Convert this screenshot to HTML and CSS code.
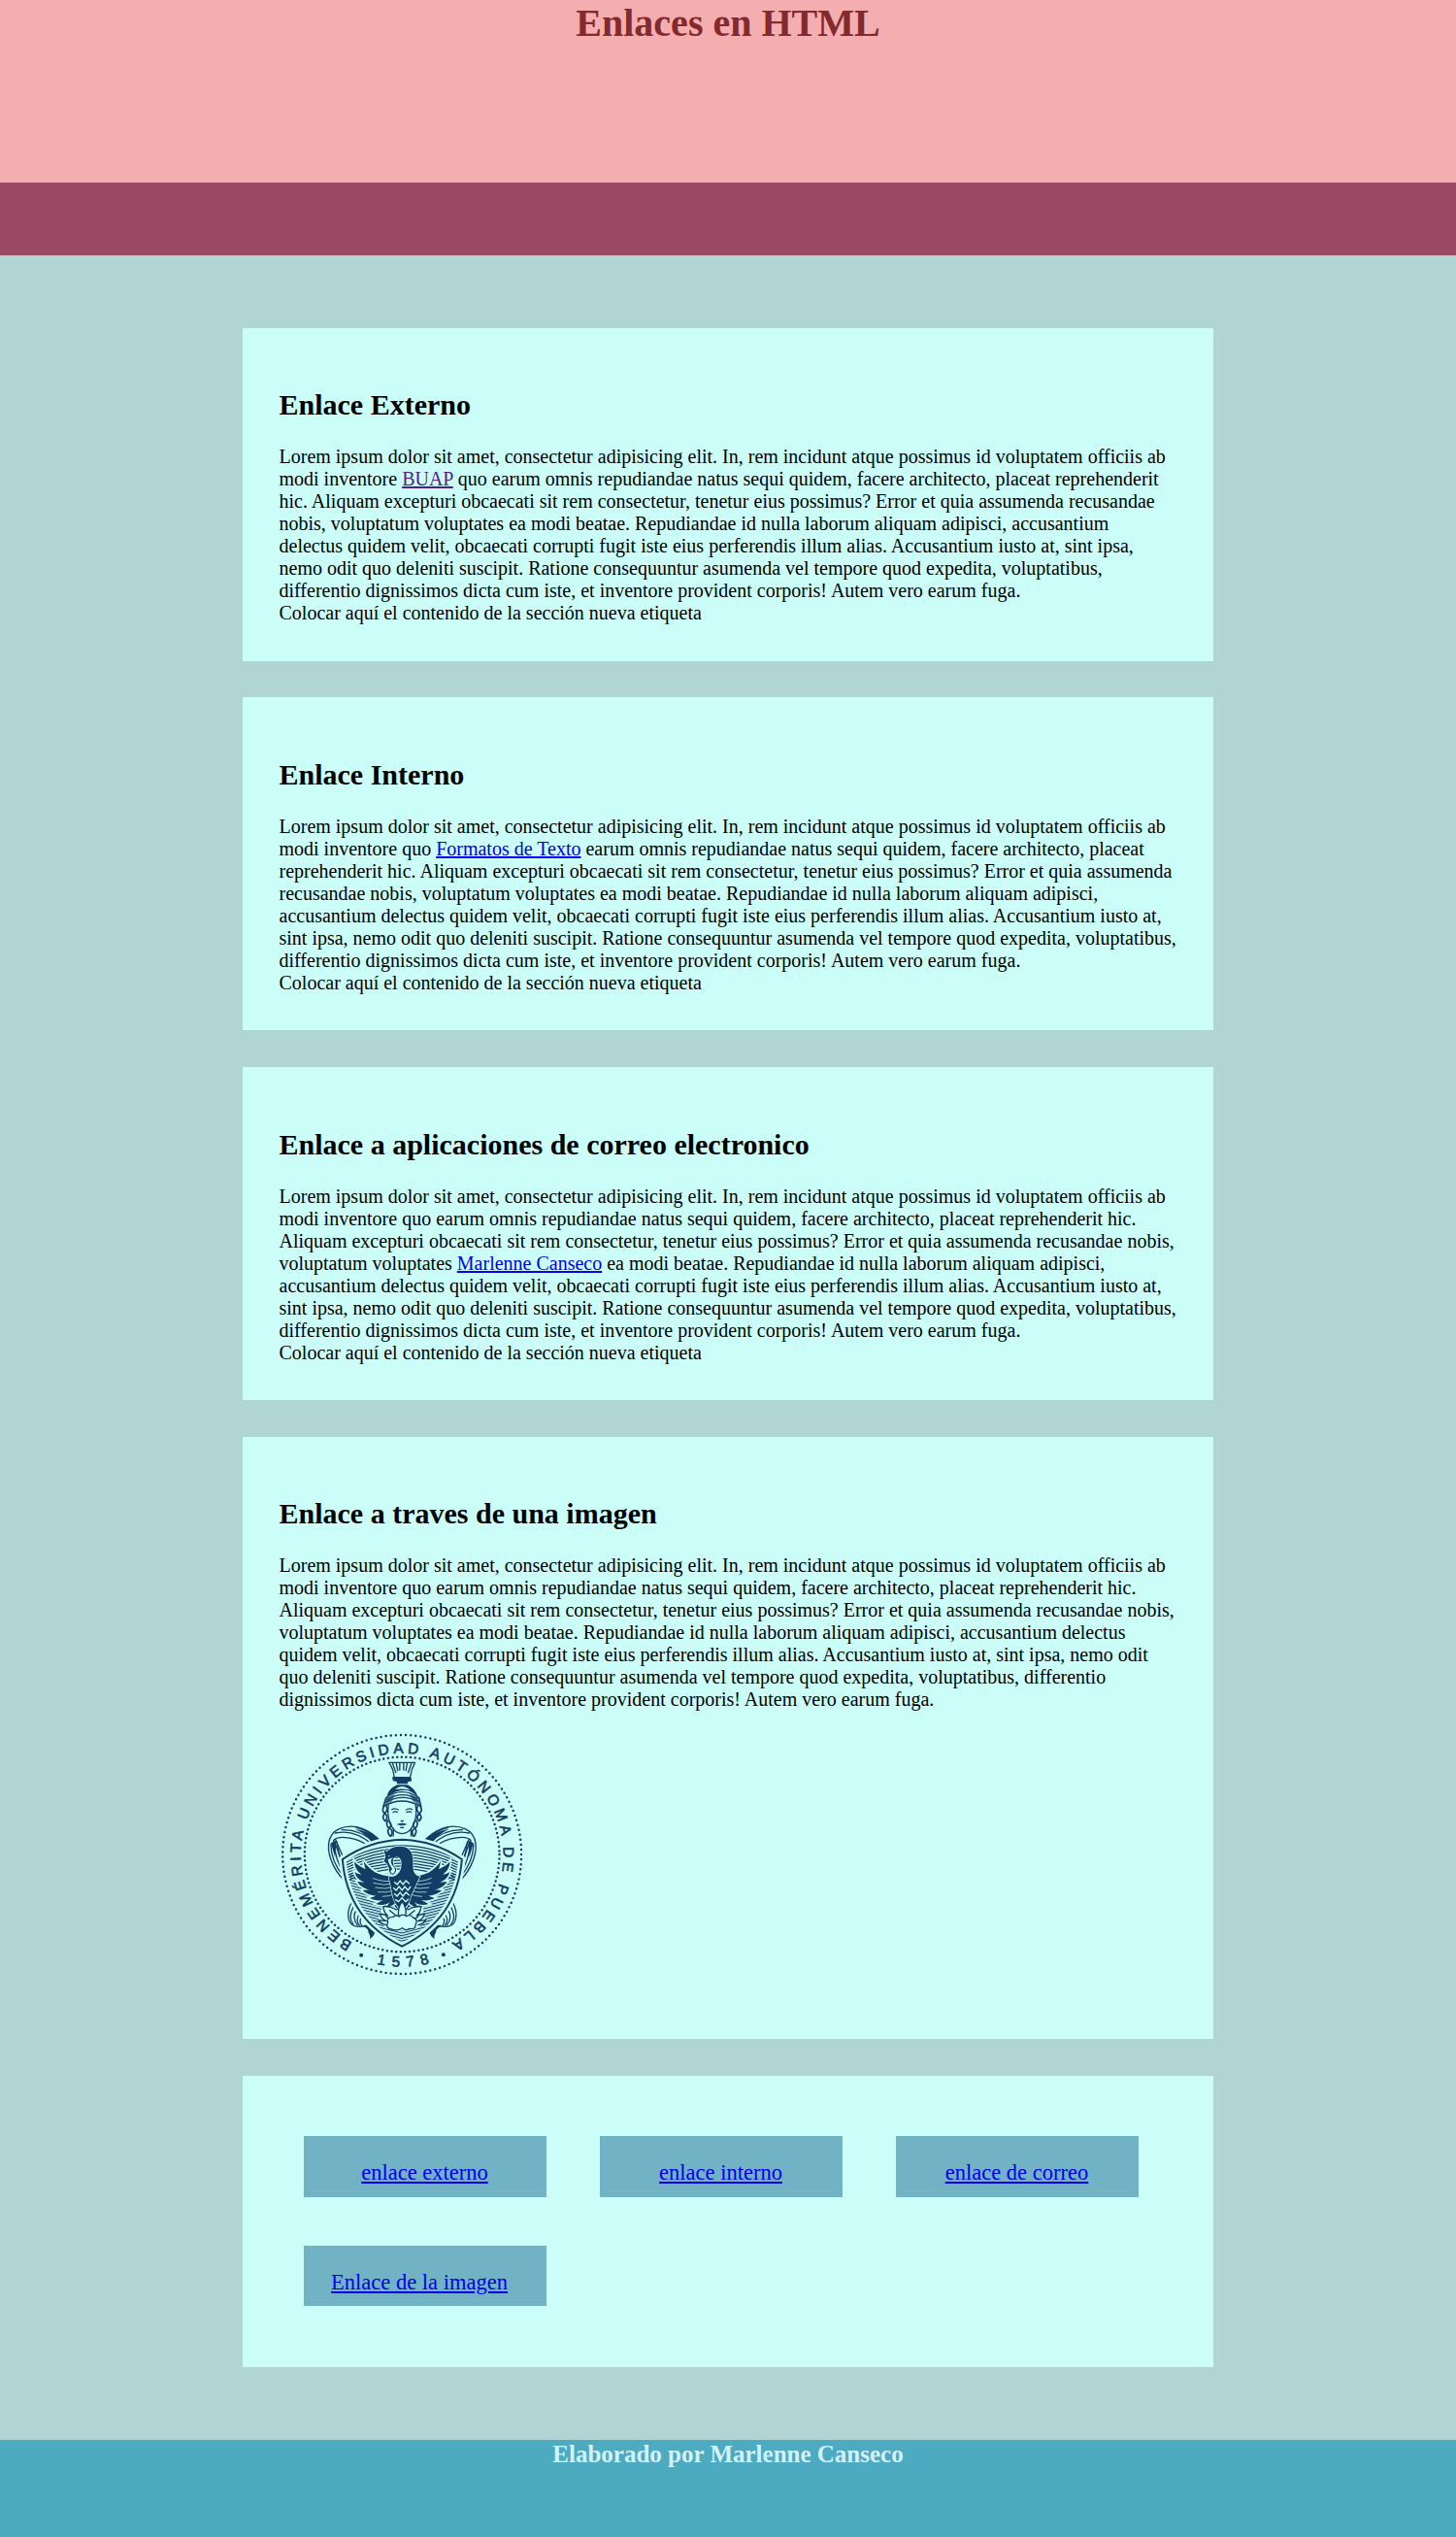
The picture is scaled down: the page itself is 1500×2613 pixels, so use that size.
FILE: index.html
```html
<!DOCTYPE html>
<html lang="es">
<head>
<meta charset="utf-8">
<title>Enlaces en HTML</title>
<link rel="stylesheet" href="styles.css">
</head>
<body>
<header class="header"><h1>Enlaces en HTML</h1></header>
<nav class="nav"></nav>
<main class="main">
  <section class="card" id="externo">
    <h2>Enlace Externo</h2>
    <div>Lorem ipsum dolor sit amet, consectetur adipisicing elit. In, rem incidunt atque possimus id voluptatem officiis ab modi inventore <a class="visited" href="#externo">BUAP</a> quo earum omnis repudiandae natus sequi quidem, facere architecto, placeat reprehenderit hic. Aliquam excepturi obcaecati sit rem consectetur, tenetur eius possimus? Error et quia assumenda recusandae nobis, voluptatum voluptates ea modi beatae. Repudiandae id nulla laborum aliquam adipisci, accusantium delectus quidem velit, obcaecati corrupti fugit iste eius perferendis illum alias. Accusantium iusto at, sint ipsa, nemo odit quo deleniti suscipit. Ratione consequuntur asumenda vel tempore quod expedita, voluptatibus, differentio dignissimos dicta cum iste, et inventore provident corporis! Autem vero earum fuga.</div>
    <div>Colocar aquí el contenido de la sección nueva etiqueta</div>
  </section>
  <section class="card" id="interno">
    <h2>Enlace Interno</h2>
    <div>Lorem ipsum dolor sit amet, consectetur adipisicing elit. In, rem incidunt atque possimus id voluptatem officiis ab modi inventore quo <a href="#interno">Formatos de Texto</a> earum omnis repudiandae natus sequi quidem, facere architecto, placeat reprehenderit hic. Aliquam excepturi obcaecati sit rem consectetur, tenetur eius possimus? Error et quia assumenda recusandae nobis, voluptatum voluptates ea modi beatae. Repudiandae id nulla laborum aliquam adipisci, accusantium delectus quidem velit, obcaecati corrupti fugit iste eius perferendis illum alias. Accusantium iusto at, sint ipsa, nemo odit quo deleniti suscipit. Ratione consequuntur asumenda vel tempore quod expedita, voluptatibus, differentio dignissimos dicta cum iste, et inventore provident corporis! Autem vero earum fuga.</div>
    <div>Colocar aquí el contenido de la sección nueva etiqueta</div>
  </section>
  <section class="card" id="correo">
    <h2>Enlace a aplicaciones de correo electronico</h2>
    <div>Lorem ipsum dolor sit amet, consectetur adipisicing elit. In, rem incidunt atque possimus id voluptatem officiis ab modi inventore quo earum omnis repudiandae natus sequi quidem, facere architecto, placeat reprehenderit hic. Aliquam excepturi obcaecati sit rem consectetur, tenetur eius possimus? Error et quia assumenda recusandae nobis, voluptatum voluptates <a href="#correo">Marlenne Canseco</a> ea modi beatae. Repudiandae id nulla laborum aliquam adipisci, accusantium delectus quidem velit, obcaecati corrupti fugit iste eius perferendis illum alias. Accusantium iusto at, sint ipsa, nemo odit quo deleniti suscipit. Ratione consequuntur asumenda vel tempore quod expedita, voluptatibus, differentio dignissimos dicta cum iste, et inventore provident corporis! Autem vero earum fuga.</div>
    <div>Colocar aquí el contenido de la sección nueva etiqueta</div>
  </section>
  <section class="card card-image" id="imagen">
    <h2>Enlace a traves de una imagen</h2>
    <div>Lorem ipsum dolor sit amet, consectetur adipisicing elit. In, rem incidunt atque possimus id voluptatem officiis ab modi inventore quo earum omnis repudiandae natus sequi quidem, facere architecto, placeat reprehenderit hic. Aliquam excepturi obcaecati sit rem consectetur, tenetur eius possimus? Error et quia assumenda recusandae nobis, voluptatum voluptates ea modi beatae. Repudiandae id nulla laborum aliquam adipisci, accusantium delectus quidem velit, obcaecati corrupti fugit iste eius perferendis illum alias. Accusantium iusto at, sint ipsa, nemo odit quo deleniti suscipit. Ratione consequuntur asumenda vel tempore quod expedita, voluptatibus, differentio dignissimos dicta cum iste, et inventore provident corporis! Autem vero earum fuga.</div>
    <a class="seal-link" href="#imagen">
      <svg class="seal" viewBox="52.5 46 750 750" role="img" aria-label="Escudo BUAP">
        <defs>
          <path id="ring" d="M431 734A313 313 0 1 1 431.1 734"/>
          <path id="ring-low" d="M84 421A347 347 0 0 0 778 421"/>
          <path id="shield" d="M247 436Q330 378 431 375Q532 378 616 436C608 540 562 640 431 705C300 640 255 540 247 436Z"/>
          <clipPath id="shield-clip"><use href="#shield"/></clipPath>
          <pattern id="hatch" width="20" height="8" patternUnits="userSpaceOnUse" patternTransform="rotate(14)"><path d="M0 4H20" class="thin"/></pattern>
          <pattern id="hatch-r" width="20" height="8" patternUnits="userSpaceOnUse" patternTransform="rotate(-14)"><path d="M0 4H20" class="thin"/></pattern>
          <g id="side">
            <!-- ribbon behind the shield -->
            <path class="line" d="M368 384C335 345 285 322 237 342C197 360 196 408 219 455C232 482 250 500 264 512M219 378C233 360 290 368 325 393M219 378C240 415 240 450 262 497M226 376L247 425"/>
            <path class="line" d="M245 345C285 344 318 358 350 386M225 355C270 345 310 365 338 390M290 338C325 345 345 362 360 382M211 390C212 430 230 465 250 488M222 385C222 420 235 455 250 475M230 382C231 400 240 430 244 445"/>
            <path class="ink" d="M285 342Q338 350 373 383L340 389Q325 360 285 342ZM211 385L228 378L224 430Z"/>
            <path class="line" d="M276 568C258 600 262 635 285 642C306 648 332 635 340 655M291 592C280 604 281 626 293 639M309 613C300 620 299 632 307 641M282 580C269 605 270 625 280 636M301 604C290 614 290 630 299 639"/>
            <path class="ink" d="M310 641C326 636 347 644 347 660C346 672 334 680 332 682C334 668 325 663 326 654C320 649 318 647 310 641Z"/>
          </g>
          <g id="wing">
            <path class="ink" d="M418 486C370 493 338 478 312 441L318 467C303 459 291 453 284 443C284 460 292 473 306 483C297 482 291 479 285 475C288 491 300 502 316 507L293 505C301 519 315 527 331 530L309 532C320 542 335 548 350 549L331 556C344 563 360 565 372 562L350 574C366 580 385 576 394 568L382 584C402 582 416 570 423 550Z"/>
            <path class="gap" d="M340 494Q374 508 405 502M342 509Q374 519 407 511M348 523Q378 530 408 521M356 537Q384 541 410 531M370 551Q391 551 412 542"/>
            <path class="line" d="M414 592Q393 579 373 582Q375 602 387 610L363 604Q365 620 383 627L359 624Q366 636 382 639M424 596Q414 586 411 579M393 594L409 607M382 613L394 621"/>
          </g>
        </defs>
        <circle class="dots" cx="431" cy="421" r="369" stroke-dasharray="0 15.35"/>
        <circle class="dots" cx="431" cy="421" r="301" stroke-dasharray="0 14.01"/>
        <text class="legend"><textPath href="#ring" startOffset="160" textLength="1646">BENEMÉRITA UNIVERSIDAD AUTÓNOMA DE PUEBLA</textPath></text>
        <text class="legend year" text-anchor="middle"><textPath href="#ring-low" startOffset="51.3%">1578</textPath></text>
        <circle class="ink" cx="305" cy="732" r="6"/><circle class="ink" cx="559" cy="731" r="6"/>
        <use href="#side"/><use href="#side" transform="matrix(-1 0 0 1 863 0)"/>
        <!-- helmet and face -->
        <path class="line" d="M391 137H471Q459 158 456 183H407Q405 158 391 137ZM402 140L412 168M413 139L418 162M424 139V160M436 139V160M447 139L443 162M460 140L450 168"/>
        <path class="ink" d="M401 181L460 184V195L449 196V203H415V196L403 194ZM416 206Q388 218 383 246Q406 222 441 222Q468 226 481 246Q473 217 448 206Z"/>
        <path class="paper" d="M410 220Q431 201 456 222Q432 216 410 220Z"/>
        <path class="ink" d="M381 246L373 273Q386 263 400 257L408 235ZM484 246L490 273Q477 263 464 257L456 235Z" opacity=".65"/>
        <path class="line" d="M381 246Q430 210 484 246L490 273Q430 239 373 273ZM385 252Q430 223 477 249M382 259Q430 232 482 257"/>
        <path class="line" d="M389 269C383 310 399 356 431 357C463 356 480 310 473 269M404 340V373M459 340V373"/>
        <path class="line braid" d="M375 272Q367 288 378 294Q389 284 383 272M378 294Q366 306 379 318Q391 306 378 294M387 316Q379 330 391 340Q402 330 392 320M391 340Q382 352 396 366Q406 351 394 340M488 272Q496 288 484 294Q473 284 479 272M484 294Q496 306 484 318Q472 306 484 294M475 316Q484 330 471 340Q461 330 470 320M471 340Q480 352 467 366Q457 351 469 340"/>
        <path class="face" d="M398 283Q409 276 421 284M442 284Q453 276 464 283M402 291Q410 286 418 291M444 291Q453 286 461 291M427 316L431 319L436 316M419 328Q431 324 442 328L431 331ZM425 338H437"/>
        <!-- shield -->
        <use href="#shield" class="paper"/>
        <g clip-path="url(#shield-clip)">
          <path fill="url(#hatch)" d="M240 480H431V720H240Z"/><path fill="url(#hatch-r)" d="M431 480H625V720H431Z"/>
          <path class="thin" d="M250 442Q431 345 613 442M250 450Q431 355 613 450M250 458Q431 365 613 458M250 466Q431 375 613 466M250 474Q431 385 613 474M250 482Q431 395 613 482M250 490Q431 405 613 490M250 498Q431 415 613 498M250 506Q431 425 613 506"/>
        </g>
        <use href="#shield" class="border-gap"/><use href="#shield" class="border"/>
        <use href="#wing" class="halo"/><use href="#wing" transform="matrix(-1 0 0 1 863 0)" class="halo"/>
        <path class="paper" d="M371 580L410 584L431 565L453 584L495 584L504 628L475 651Q431 663 382 650L357 622Z"/>
        <use href="#wing"/><use href="#wing" transform="matrix(-1 0 0 1 863 0)"/>
        <!-- phoenix -->
        <path class="body" d="M374 402L383 413Q399 395 428 396C457 398 467 418 465 450C464 471 469 486 486 489L458 550Q454 576 431 596Q407 575 402 547L390 490C410 492 424 480 428 462C433 438 424 425 410 429C398 434 402 454 412 464Q416 475 403 484Q388 478 391 463L383 448L375 443L380 428Z"/>
        <path class="paper" d="M404 430Q391 439 401 455Q414 466 407 477Q400 485 395 473L401 466L391 449L387 437Z"/>
        <circle class="paper" cx="391" cy="426" r="2"/>
        <path class="scale" d="M407 506L416 514L425 502L434 514L443 502L454 512M404 524L413 532L422 520L431 532L440 520L449 532L458 520M407 542L416 550L425 538L434 550L443 538L454 548M410 560L420 567L431 555L442 567L451 558"/>
        <path class="cloud" d="M431 566Q416 588 421 612Q431 624 441 612Q448 588 431 566Z"/>
        <path class="cloud" d="M397 652Q379 648 387 632Q382 613 405 614Q412 605 422 613Q432 602 444 612Q457 604 465 616Q482 622 473 637Q474 654 455 650Q445 659 432 648Q417 659 397 652Z"/>
      </svg>
    </a>
  </section>
  <section class="card menu">
    <a href="#externo">enlace externo</a>
    <a href="#interno">enlace interno</a>
    <a href="#correo">enlace de correo</a>
    <a class="menu-image" href="#imagen">Enlace de la imagen</a>
  </section>
</main>
<footer class="footer"><h3>Elaborado por Marlenne Canseco</h3></footer>
</body>
</html>
```
FILE: styles.css
```css
* { box-sizing: border-box; }
body { margin: 0; background: #b0d5d4; color: #000; font: 20px/23px "Liberation Serif", "Times New Roman", serif; }
h1, h2, h3 { margin: 0; }
a { color: #0000ee; }
.visited { color: #551a8b; }
.header { height: 188px; background: #f5aeb0; color: #84292d; text-align: center; }
.header h1 { font-size: 40px; line-height: 48px; }
.nav { height: 75px; background: #9b4a66; }
.main { display: flex; flex-direction: column; gap: 37.8px; width: 1000px; margin: 0 auto; padding: 74.6px 0 75px; }
.card { height: 343px; padding: 62.5px 37.5px 37.5px; background: #ccfef9; }
.card h2 { margin-bottom: 25px; font-size: 30px; line-height: 34px; }
.card-image { height: 620px; }
.seal-link { display: block; width: 250px; margin-top: 22.8px; }
.seal { display: block; width: 250px; height: 250px; }
.menu { display: grid; grid-template-columns: repeat(3, 250px); gap: 50px 55px; align-content: start; height: 300px; padding: 62.5px; }
.menu a { height: 62.5px; padding-top: 25px; background: #71b2c5; font-size: 22.5px; line-height: 26px; text-align: center; }
.menu .menu-image { padding-right: 11px; }
.footer { height: 100.2px; background: #4caac1; color: #d4f1f9; text-align: center; }
.footer h3 { font-size: 25px; line-height: 29px; }

.ink { fill: #123d64; }
.paper { fill: #ccfef9; }
.line { fill: none; stroke: #123d64; stroke-width: 4; stroke-linecap: round; stroke-linejoin: round; }
.braid { stroke-width: 5; }
.face { fill: none; stroke: #123d64; stroke-width: 3.4; }
.thin { fill: none; stroke: #123d64; stroke-width: 3.4; }
.gap { fill: none; stroke: #ccfef9; stroke-width: 3; opacity: .7; }
.scale { fill: none; stroke: #ccfef9; stroke-width: 4; }
.dots { fill: none; stroke: #123d64; stroke-width: 7.5; stroke-linecap: round; }
.border-gap { fill: none; stroke: #ccfef9; stroke-width: 22; }
.border { fill: none; stroke: #123d64; stroke-width: 6; }
.halo { stroke: #ccfef9; stroke-width: 10; }
.body { fill: #123d64; stroke: #ccfef9; stroke-width: 4; paint-order: stroke; }
.cloud { fill: #ccfef9; stroke: #123d64; stroke-width: 4; }
.legend { fill: #123d64; stroke: #123d64; stroke-width: 1.8; font: 400 46px "Liberation Sans", Arial, sans-serif; }
.year { letter-spacing: 21px; }
```
